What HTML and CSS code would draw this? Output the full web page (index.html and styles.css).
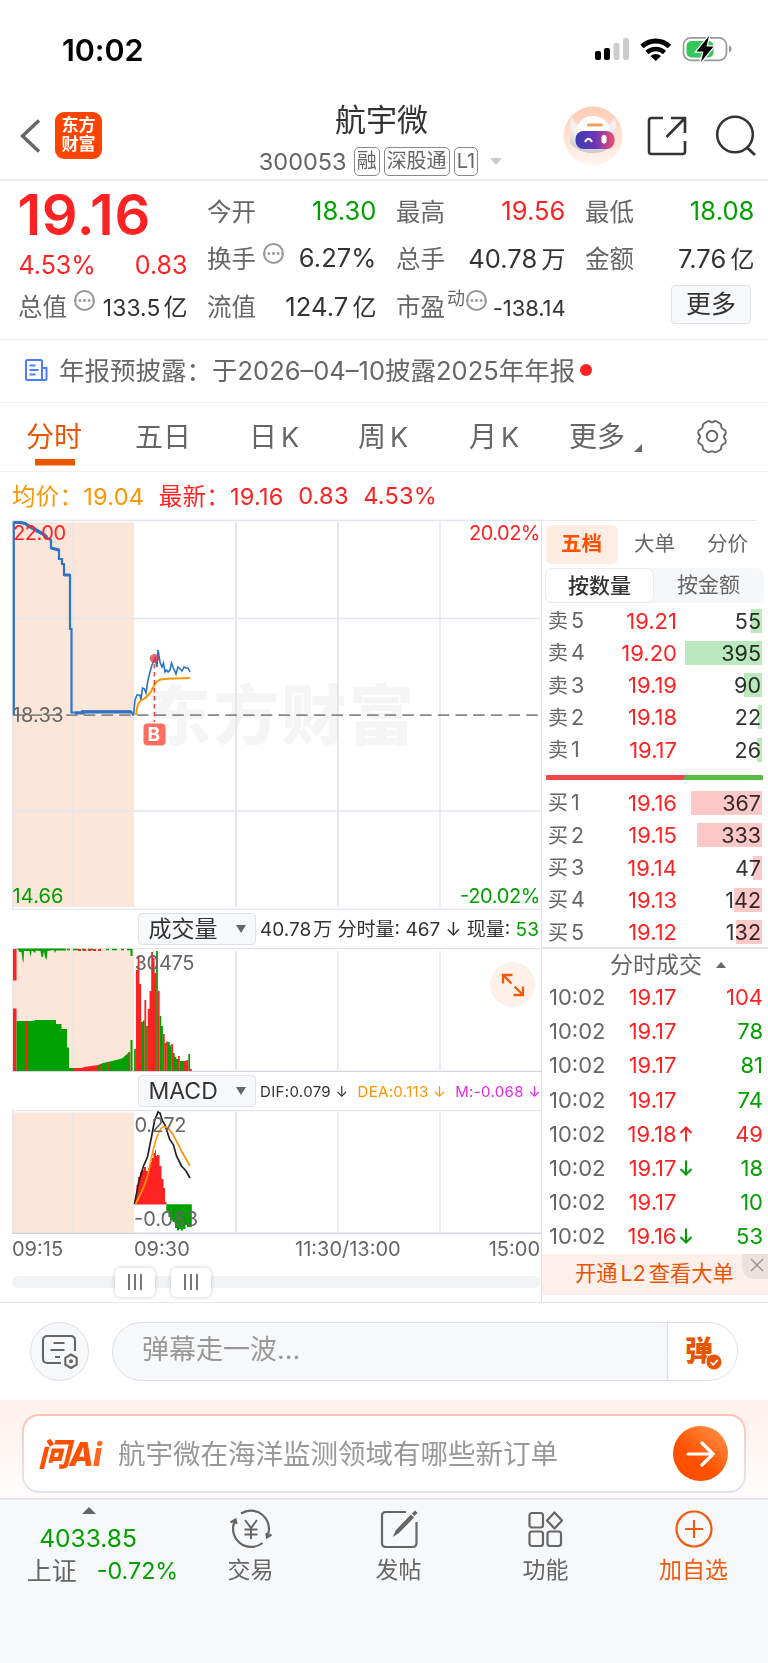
FILE: index.html
```html
<!DOCTYPE html>
<html lang="zh-CN">
<head>
<meta charset="utf-8">
<title>航宇微 300053</title>
<link rel="stylesheet" href="styles.css">
</head>
<body>
<div class="status">
  <span class="clock">10:02</span>
  <svg class="status-icons" width="140" height="40" viewBox="592 29 140 40">
    <rect x="595" y="51" width="6" height="9" rx="2"/><rect x="604" y="48" width="6" height="12" rx="2"/>
    <rect x="613.500" y="43" width="6" height="17" rx="2" fill="#ccc"/><rect x="623" y="38" width="6" height="22" rx="2" fill="#ccc"/>
    <path d="M642 46.500a20 20 0 0 1 27.500 0" fill="none" stroke="#000" stroke-width="5"/>
    <path d="M647 52.500a13 13 0 0 1 17.500 0" fill="none" stroke="#000" stroke-width="4.500"/>
    <path d="M650.500 56a8 8 0 0 1 10.500 0l-5.200 5z"/>
    <rect x="683.500" y="37.800" width="43" height="22.500" rx="7.500" fill="#fff" stroke="#999" stroke-width="1.700"/>
    <rect x="686.500" y="41" width="27" height="16.500" rx="5" fill="#34c759"/>
    <path d="M729 45.500v7q2.800-1 2.800-3.500t-2.800-3.500z" fill="#999"/>
    <path d="M709 36l-12.500 15.500h7l-2.500 10.500 12.500-15.500h-7z" stroke="#fff" stroke-width="2.500" paint-order="stroke"/>
  </svg>
</div>

<header class="header">
  <svg class="back" width="24" height="40" viewBox="0 0 24 40"><path d="M20 4.500L3.500 20 20 35.500" fill="none" stroke="#666" stroke-width="3.400"/></svg>
  <div class="logo">东方<br>财富</div>
  <div class="title">
    <h1>航宇微</h1>
    <div class="code"><span class="num">300053</span><span class="badge">融</span><span class="badge">深股通</span><span class="badge">L1</span><i class="caret"></i></div>
  </div>
  <svg class="avatar" width="60" height="60" viewBox="0 0 60 60">
    <defs>
      <linearGradient id="halo" x1="0" y1="0" x2="0" y2="1"><stop offset="0" stop-color="#ffccb3"/><stop offset="1" stop-color="#fff6f1"/></linearGradient>
      <linearGradient id="visor" x1="0" y1="0" x2="1" y2="0"><stop offset="0" stop-color="#3c3cae"/><stop offset=".5" stop-color="#6a35b8"/><stop offset="1" stop-color="#f0506e"/></linearGradient>
      <radialGradient id="shell" cx=".5" cy=".3" r=".75"><stop offset=".4" stop-color="#fff"/><stop offset="1" stop-color="#c3c0c8"/></radialGradient>
    </defs>
    <circle cx="30" cy="30" r="29.500" fill="url(#halo)"/>
    <path d="M9 11q-4 7 0 14l8-5q-6-3-8-9zM51 12q4 7 0 14l-8-5q6-3 8-9z" fill="#f1eff1"/>
    <path d="M15 19q5-9 15-9t16 9q8 5 6 17-1 5-6 6-5 5-16 5t-17-5q-5-2-6-7 0-10 8-16z" fill="url(#shell)"/>
    <rect x="24" y="17.500" width="16" height="3" rx="1.500" fill="#e9a15f"/>
    <rect x="12.500" y="25" width="39" height="18" rx="8" fill="url(#visor)"/>
    <path d="M22 36q3.500-6.500 7 0" fill="none" stroke="#fff" stroke-width="2"/><rect x="38.500" y="29" width="5" height="8.500" rx="2.200" fill="#fff"/>
  </svg>
  <svg class="share" width="42" height="42" viewBox="0 0 42 42"><path d="M17 3H5.500Q3 3 3 5.500v31Q3 39 5.500 39h31q2.500 0 2.500-2.500V26M25 3h14v15M39 3L20.500 22" fill="none" stroke="#333" stroke-width="2.600"/></svg>
  <svg class="search" width="42" height="42" viewBox="0 0 42 42"><circle cx="20" cy="19.500" r="17.800" fill="none" stroke="#333" stroke-width="2.500"/><path d="M32 32.500l8 7.500" stroke="#333" stroke-width="2.800"/></svg>
</header>

<section class="quote">
  <div class="cell price">19.16</div>
  <div class="cell"><label>今开</label><b class="green">18.30</b></div>
  <div class="cell"><label>最高</label><b class="red">19.56</b></div>
  <div class="cell"><label>最低</label><b class="green">18.08</b></div>
  <div class="cell change"><b class="red">4.53%</b><b class="red">0.83</b></div>
  <div class="cell"><label>换手</label><i class="tip"></i><b>6.27%</b></div>
  <div class="cell"><label>总手</label><b class="unit">40.78<em>万</em></b></div>
  <div class="cell"><label>金额</label><b class="unit">7.76<em>亿</em></b></div>
  <div class="cell"><label>总值</label><i class="tip"></i><b class="small unit">133.5<em>亿</em></b></div>
  <div class="cell"><label>流值</label><b class="unit">124.7<em>亿</em></b></div>
  <div class="cell"><label>市盈<sup>动</sup></label><i class="tip near"></i><b class="pe">-138.14</b></div>
  <div class="cell last"><button class="more">更多</button></div>
</section>

<section class="notice">
  <svg width="24" height="24" viewBox="0 0 24 24" fill="none" stroke="#4c7cff" stroke-width="2" stroke-linejoin="round"><path d="M18 22H3.500Q2 22 2 20.500v-17Q2 2 3.500 2H16.500Q18 2 18 3.500V22h3q1.500 0 1.500-1.500V10H18M5.500 7.500h6M5.500 12h9M5.500 16.500h6"/></svg>
  <span>年报预披露：于2026–04–10披露2025年年报</span><i class="dot"></i>
</section>

<nav class="tabs">
  <span class="on">分时</span><span>五日</span><span>日<em>K</em></span><span>周<em>K</em></span><span>月<em>K</em></span><span>更多<i class="corner"></i></span>
  <svg width="34" height="34" viewBox="0 0 34 34" fill="none" stroke="#666" stroke-width="1.900"><path d="M12.500 2.500q1.500-1 3 .4 1.500 1 3 0 1.500-1.400 3-.4l3.500 2q1.500 1 1.200 2.800 0 2 1.800 2.800 2.600.8 2.700 2.400v1.500q-.2 1.400-1.400 2.500-.8 1 0 2.500 1.200 1 1.400 2.500v1.500q-.1 1.600-2.700 2.400-1.800.8-1.800 2.800.3 1.800-1.200 2.800l-3.500 2q-1.500 1-3-.4-1.500-1-3 0-1.500 1.400-3 .4l-3.500-2q-1.500-1-1.200-2.800 0-2-1.800-2.800-2.600-.8-2.700-2.400v-1.500q.2-1.500 1.400-2.500.8-1.500 0-2.500-1.200-1.100-1.400-2.500V12.500q.1-1.600 2.700-2.400 1.800-.8 1.800-2.800-.3-1.800 1.200-2.800z"/><circle cx="17" cy="17" r="5.300"/></svg>
</nav>

<div class="summary"><span class="avg">均价：19.04</span><span class="red">最新：19.16</span><span class="red">0.83</span><span class="red">4.53%</span></div>

<main class="board">
  <section class="charts">
    <svg class="plot" width="542" height="391" viewBox="0 519 542 391">
      <rect x="12.500" y="522.500" width="121.500" height="384.500" fill="#fce5d9"/>
      <g font-weight="800" font-size="65" fill="#f5f5f5"><text x="146" y="739" textLength="268">东方财富</text></g>
      <g stroke="#e3e6ed" stroke-width="1.400" fill="none"><path d="M12 520.500H542M12.700 520V909M12 909.500H542M12 618.500H542M12 811H542M73 522V907M440 522V907"/><path d="M236 522V907M338 522V907" stroke-width="1.900"/></g>
      <path d="M13 715.200H542" stroke="#888" stroke-width="1.700" stroke-dasharray="11.500 6.200"/>
      <path d="M13.800 715V522.500L20 522.500 25 523.500 28 526 33 529 38 532 43 534.500 46 537.500 51 540V548L59 550V559H62V564H64V575H70V629H71.500V712.500H82V711.500H131L133.500 715.500" fill="none" stroke="#2e74c4" stroke-width="2.200"/>
      <path d="M14 522.500h7l4 1 4 2.500 9 5 6 3.500 3 3M51 548l8 2M64 575h6M75 713h8v-1.200h48" fill="none" stroke="#2e74c4" stroke-width="3.200"/>
      <path d="M133.500 715.500L135 700 137 695 140 695 141 700 142.500 688 144.500 689 146 693 148 680 150 672 152 665 155 658 157 667 158 650 160 662 162 667 163.500 663 165 672 166.500 670 168 672 170 670 171.500 663 173 667 176 674 178 667 180 669 182 671 184 667 186 668 188 668 190 672" fill="none" stroke="#2e74c4" stroke-width="1.600"/>
      <path d="M136 715C137 706 138 702 141 700.500 147 698 150 694 154 686 157 680 160 679 167 678.700L190 678" fill="none" stroke="#ff9500" stroke-width="1.900"/>
      <path d="M154.400 664V722" stroke="#f04848" stroke-width="1.600" stroke-dasharray="4.500 3.500"/>
      <circle cx="154.400" cy="658.500" r="4.600" fill="#e5353d" fill-opacity=".75"/>
      <rect x="143.500" y="723.500" width="22" height="22" rx="4" fill="#ff6f61"/>
      <text x="147.600" y="741.200" font-size="19" font-weight="700" fill="#fff">B</text>
      <g font-size="20"><text x="13" y="540" textLength="53" fill="#f22">22.00</text><text x="12.500" y="721.500" textLength="51" fill="#666">18.33</text><text x="12.500" y="902.500" textLength="51" fill="#00a000">14.66</text>
      <text x="469" y="540" textLength="71.500" fill="#f22">20.02%</text><text x="460" y="902.500" textLength="80.500" fill="#00a000">-20.02%</text></g>
    </svg>

    <div class="bar"><button class="pick">成交量<i></i></button><span class="vol">40.78<em>万</em> 分时量: 467 ↓ 现量: <b class="green">53</b></span></div>

    <div class="volume">
    <svg class="plot" width="542" height="124" viewBox="0 948 542 124">
      <rect x="12.500" y="948.500" width="121.500" height="122" fill="#fce5d9"/>
      <g stroke="#e3e6ed" stroke-width="1.400"><path d="M12 948.500H542M12.700 948V1071M73 951V1070M440 951V1070"/><path d="M236 951V1070" stroke-width="1.900"/><path d="M338 951V1070"/></g>
      <path d="M12 1071.500H542" stroke="#d3d6dc" stroke-width="1.400"/>
      <path d="M13 949h3.500v31.500H13zM13 1008.500h3.500V1071H13z" fill="#f22"/>
      <path d="M16.500 1071V1021H34L35 1020H56V1024H61.500V1029H67V1047.500H69V1071z" fill="#00a000"/>
      <path d="M25.500 1021h2V1071h-2z" fill="#f22"/>
      <path d="M69 1071V1068H82L84 1067 98 1065V1071z" fill="#f22"/><path d="M69 1071V1068h4l1 0.500v2.500z" fill="#00a000"/>
      <path d="M98 1071V1065L103 1063 112 1061 122 1058.500 126 1055 129 1052V1071z" fill="#00a000"/>
      <path d="M108 1062.500V1071M129.500 1052V1071M101 1064V1071" stroke="#f22" stroke-width="1.500"/>
      <path d="M131.500 1040V1071M131.500 949v7" stroke="#00a000" stroke-width="2"/>
      <path d="M17 948.500H66V950.500H56L55 953 54 950 47.500 951 46.500 960 45 957 44 951 43 957 41.500 957 40.500 951 36 950.500 35 953 33 951 31.500 951 30.500 957.500 29.500 951 24 951 23.500 963 22.500 960 21.500 952 20 952 18 950z" fill="#00a000"/>
      <path d="M67 949.500H96M106 949.500H131" stroke="#00a000" stroke-width="1.500" stroke-dasharray="3 3 5 4"/>
      <path d="M78 950H101" stroke="#f22" stroke-width="1.800" stroke-dasharray="3 2"/>
      <g stroke-width="1.800">
        <path d="M135 1071V1049M142 1071V1022M143.700 1071V1020.500M147 1071V1026M157 1071V951M160.400 1071V1016M162 1071V1026M165.400 1071V1043M168.800 1071V1042M170.500 1071V1045.500M173.800 1071V1053M175.500 1071V1057M177.200 1071V1059M180.600 1071V1061M182.200 1071V1061M189.200 1071V1054" stroke="#00a000"/>
        <path d="M136.800 1071V970M138.500 1071V957M140.200 1071V984M145.300 1071V1000M148.700 1071V1009M150.400 1071V991M152.100 1071V952M153.700 1071V958M155.300 1071V973M158.700 1071V991M163.800 1071V1034M167.100 1071V1041.500M172.100 1071V1044M178.900 1071V1056M183.900 1071V1061M185.600 1071V1061M187.300 1071V1060M190.900 1071V1069" stroke="#f22"/>
      </g>
      <text x="134.500" y="970" font-size="20" textLength="60" fill="#666">30475</text>
    </svg>
    <div class="expand"><svg width="24" height="24" viewBox="0 0 24 24" fill="none" stroke="#f25b0c" stroke-width="2.300"><path d="M2 10.500V2h9.500M2 2l8.500 8.500M22 13.500V22h-9.500M22 22l-8.500-8.500"/></svg></div>
    </div>

    <div class="bar"><button class="pick">MACD<i></i></button><span class="macd"><span>DIF:0.079 ↓</span><span class="avg">DEA:0.113 ↓</span><span class="pink">M:-0.068 ↓</span></span></div>

    <svg class="plot" width="542" height="124" viewBox="0 1110 542 124">
      <rect x="12.500" y="1112.500" width="121.500" height="120" fill="#fce5d9"/>
      <g stroke="#e3e6ed" stroke-width="1.400"><path d="M12 1110.500H542M12.700 1110V1233M73 1112V1232M440 1112V1232"/><path d="M236 1112V1232" stroke-width="1.900"/><path d="M338 1112V1232"/></g>
      <path d="M12 1233.300H542" stroke="#d3d6dc" stroke-width="1.500"/>
      <path d="M135 1204.500V1196H136.500V1185H138V1177H140V1172H142V1170H144V1167H146V1171H148V1168H150V1162H152V1158H153.500V1153H155V1150H156V1156H157V1155H159.500V1166H161.500V1179H163.500V1188H165V1202H166.500V1204.500z" fill="#f22"/>
      <path d="M166.300 1204.200H191.800V1227H187V1225H185.500V1229H183V1230.500H181V1229H179V1230.500H177V1228H175V1222H172.500V1220H170.500V1217H168.500V1211H166.300z" fill="#00a000"/>
      <path d="M134.500 1204L138.500 1183 143.500 1166 147.500 1157 151.500 1137 154.500 1121 158 1112 160 1113 162.500 1121 165 1125 169.500 1139 173.500 1145 176.500 1156 181.500 1166 186 1171 190 1178" fill="none" stroke="#222" stroke-width="1.700"/>
      <path d="M135.500 1204Q146 1185 149 1170 157 1127 164 1126.500C171 1128 174 1137 182 1152L190 1166" fill="none" stroke="#ff9500" stroke-width="1.700"/>
      <g font-size="20" fill="#666"><text x="134.500" y="1132" textLength="52">0.272</text><text x="134" y="1226" textLength="64">-0.083</text></g>
    </svg>

    <div class="axis"><span>09:15</span><span>09:30</span><span>11:30/13:00</span><span>15:00</span></div>
    <div class="slider"><i></i><i></i></div>
  </section>

  <aside class="depth">
    <div class="dtabs"><span class="on">五档</span><span>大单</span><span>分价</span></div>
    <div class="seg"><span class="on">按数量</span><span>按金额</span></div>
    <div class="book sell">
      <div><span>卖<em>5</em></span><b>19.21</b><span class="q"><i style="width:11px"></i>55</span></div>
      <div><span>卖<em>4</em></span><b>19.20</b><span class="q"><i style="width:77px"></i>395</span></div>
      <div><span>卖<em>3</em></span><b>19.19</b><span class="q"><i style="width:18px"></i>90</span></div>
      <div><span>卖<em>2</em></span><b>19.18</b><span class="q"><i style="width:4px"></i>22</span></div>
      <div><span>卖<em>1</em></span><b>19.17</b><span class="q"><i style="width:5px"></i>26</span></div>
    </div>
    <div class="ratio"></div>
    <div class="book buy">
      <div><span>买<em>1</em></span><b>19.16</b><span class="q"><i style="width:71px"></i>367</span></div>
      <div><span>买<em>2</em></span><b>19.15</b><span class="q"><i style="width:65px"></i>333</span></div>
      <div><span>买<em>3</em></span><b>19.14</b><span class="q"><i style="width:9px"></i>47</span></div>
      <div><span>买<em>4</em></span><b>19.13</b><span class="q"><i style="width:28px"></i>142</span></div>
      <div><span>买<em>5</em></span><b>19.12</b><span class="q"><i style="width:26px"></i>132</span></div>
    </div>
    <div class="ticks-head">分时成交<i></i></div>
    <div class="ticks">
      <div><span>10:02</span><b>19.17</b><i></i><u class="red">104</u></div>
      <div><span>10:02</span><b>19.17</b><i></i><u class="green">78</u></div>
      <div><span>10:02</span><b>19.17</b><i></i><u class="green">81</u></div>
      <div><span>10:02</span><b>19.17</b><i></i><u class="green">74</u></div>
      <div><span>10:02</span><b>19.18</b><i class="red"><svg width="14" height="16" viewBox="0 0 14 16"><path d="M7 15.500V1.500M1.500 7L7 1.500 12.500 7"/></svg></i><u class="red">49</u></div>
      <div><span>10:02</span><b>19.17</b><i class="green"><svg width="14" height="16" viewBox="0 0 14 16"><path d="M7 .5V14.500M1.500 9L7 14.500 12.500 9"/></svg></i><u class="green">18</u></div>
      <div><span>10:02</span><b>19.17</b><i></i><u class="green">10</u></div>
      <div><span>10:02</span><b>19.16</b><i class="green"><svg width="14" height="16" viewBox="0 0 14 16"><path d="M7 .5V14.500M1.500 9L7 14.500 12.500 9"/></svg></i><u class="green">53</u></div>
    </div>
    <div class="promo">开通<em>L2</em>查看大单<span class="close"><svg width="14" height="14" viewBox="0 0 14 14"><path d="M1 1l12 12M13 1L1 13" stroke="#999" stroke-width="1.500"/></svg></span></div>
  </aside>
</main>

<section class="comment">
  <div class="round"><svg width="38" height="36" viewBox="0 0 38 36" fill="none" stroke="#666" stroke-width="2.100"><path d="M20 29H6.500Q2 29 2 24.500V6.500Q2 2 6.500 2h23Q34 2 34 6.500V17"/><path d="M12.500 9h11M9.500 16h14M14 23h5"/><path d="M30 20.500l5.700 3.400v6.800L30 34l-5.700-3.300v-6.800z" stroke-linejoin="round"/><circle cx="30" cy="27.200" r="1" /></svg></div>
  <div class="field"><span>弹幕走一波...</span><div class="send">弹<i><svg width="16" height="16" viewBox="0 0 16 16"><circle cx="8" cy="8" r="7.500" fill="#ea5504"/><path d="M4.500 8l2.700 2.800 4.600-5" fill="none" stroke="#fff" stroke-width="1.700"/></svg></i></div></div>
</section>

<section class="ask">
  <div class="card">
    <span class="brand">问Ai</span><span class="query">航宇微在海洋监测领域有哪些新订单</span>
    <div class="go"><svg width="30" height="26" viewBox="0 0 30 26"><path d="M2 13h25M16 2l11 11-11 11" fill="none" stroke="#fff" stroke-width="3.200" stroke-linecap="round" stroke-linejoin="round"/></svg></div>
  </div>
</section>

<footer class="dock">
  <div class="index"><i></i><b>4033.85</b><p><span>上证</span><b>-0.72%</b></p></div>
  <div class="item"><svg width="44" height="40" viewBox="0 0 44 40" fill="none" stroke="#666" stroke-width="2.200"><path d="M12 4.500A18.200 18.200 0 0 1 38.500 27M6 11.500A18.200 18.200 0 0 0 33.500 34"/><path d="M1.500 13.500L6.500 10.500 7.500 15M42.500 25.500L38 28.500 37.300 24"/><path d="M16 11l6 8 6-8M22 19v11M15.500 20.500h13M15.500 25.500h13" stroke-width="2"/></svg><span>交易</span></div>
  <div class="item"><svg width="40" height="40" viewBox="0 0 40 40" fill="none" stroke="#666" stroke-width="2.200"><path d="M27 3H7Q3 3 3 7v27q0 4 4 4h26.500q4 0 4-4V13"/><path d="M17.500 21.500L32 6.500l2 2L19.500 23.500l-4 2.500zM34 4.500l2-2 1.500 1.500-2 2z" fill="#666" stroke-width="1.500"/></svg><span>发帖</span></div>
  <div class="item"><svg width="40" height="40" viewBox="0 0 40 40" fill="none" stroke="#666" stroke-width="2.200" stroke-linejoin="round"><rect x="3.500" y="4" width="13.500" height="14.500" rx="2.500"/><path d="M28.500 3.500l7.500 8-7.500 8-7.500-8z"/><rect x="3.500" y="22.500" width="13.500" height="14.500" rx="2.500"/><rect x="21.500" y="22.500" width="13.500" height="14.500" rx="2.500"/></svg><span>功能</span></div>
  <div class="item hot"><svg width="40" height="40" viewBox="0 0 40 40" fill="none" stroke="#f25b0c" stroke-width="2.200"><circle cx="20" cy="20" r="17.500"/><path d="M20 11v18M11 20h18"/></svg><span>加自选</span></div>
</footer>
</body>
</html>
```

FILE: styles.css
```css
* { box-sizing: border-box; }
body { margin: 0; width: 768px; height: 1663px; overflow: hidden; background: #fff; color: #333; font-family: Inter, "Noto Sans CJK SC", sans-serif; }
b, em, i, u, h1 { font-weight: 400; font-style: normal; text-decoration: none; }
svg { display: block; flex: none; }
svg text { font-family: Inter, "Noto Sans CJK SC", sans-serif; }
button { font-family: inherit; padding: 0; color: #333; background: #f7f8fa; border: 1.5px solid #dfe1e6; border-radius: 4px; }
.red { color: #f22; }
.green { color: #00a000; }
.avg { color: #ff9500; }
.pink { color: #e32be8; }

.status { display: flex; justify-content: space-between; height: 98px; padding: 29px 36px 0 62px; }
.clock { height: 40px; line-height: 41px; font-size: 30.500px; font-weight: 600; color: #000; letter-spacing: -0.1px; }

.header { display: flex; align-items: center; height: 83px; padding-bottom: 5px; border-bottom: 2px solid #ececee; }
.back { margin-left: 19px; }
.logo { width: 47px; height: 47px; margin: -1px 0 0 12px; padding-top: 4px; border-radius: 9px; background: #f40; color: #fff; font-size: 17px; line-height: 19px; font-weight: 700; text-align: center; }
.title { flex: 1; display: flex; flex-direction: column; align-items: center; margin-top: -2px; padding-left: 98px; }
.title h1 { margin: 5px 0 0; font-size: 31px; line-height: 42px; }
.code { display: flex; align-items: center; height: 30px; margin-top: 5px; margin-left: -2px; color: #666; }
.code .num { font-size: 23.5px; letter-spacing: 0; margin-right: 7px; }
.badge { height: 29px; padding: 0 2px; margin-right: 4px; border: 1.5px solid #888; border-radius: 5px; font-size: 20px; line-height: 26px; }
.caret { border: 6.5px solid transparent; border-top: 7px solid #ccc; border-bottom: 0; margin-left: 8px; }
.avatar { margin-right: 23px; }
.share { margin-right: 27px; }
.search { margin-right: 11px; }

.quote { display: grid; grid-template-columns: repeat(4, 169px); column-gap: 20px; grid-auto-rows: 47.300px; height: 159px; padding: 6px 0 0 18.500px; border-bottom: 1.5px solid #f1f1f3; }
.cell { display: flex; align-items: center; font-size: 25px; }
.cell label { color: #666; font-size: 24.5px; margin-left: -0.5px; white-space: nowrap; }
.cell b { margin-left: auto; font-size: 25.500px; letter-spacing: 0.1px; white-space: nowrap; }
.cell .unit em { margin-left: 4px; font-size: 24px; }
.cell .small { font-size: 22.800px; letter-spacing: 0.1px; }
.cell .small em { margin-left: 3px; }
.cell.price { padding-top: 8px; font-size: 56px; font-weight: 600; color: #f22; letter-spacing: 0.6px; margin-left: -1px; }
.cell.change { padding-top: 15px; }
.cell.change b { font-size: 25px; letter-spacing: 0; }
.cell.change b:first-child { margin-left: 0; }
.tip { flex: none; width: 21px; height: 21px; margin: -9px 0 0 7px; border: 2px solid #999; border-radius: 50%; background: radial-gradient(circle, #999 1.2px, transparent 1.6px) center / 4.600px 17px; }
.tip.near { margin-left: 1px; }
.cell sup { font-size: 18px; vertical-align: 11px; line-height: 0; margin-left: 2px; }
.cell .pe { font-size: 22px; padding-top: 5px; letter-spacing: -0.1px; }
.cell.last { justify-content: flex-end; padding-right: 3.500px; }
.more { width: 80px; height: 39px; font-size: 25px; line-height: 34px; margin-top: -2px; }

.notice { display: flex; align-items: center; height: 63px; padding: 0 0 2px 24px; border-bottom: 1.5px solid #f1f1f3; font-size: 25.500px; color: #666; }
.notice span { margin: -3px 0 0 11px; white-space: nowrap; }
.dot { width: 12px; height: 12px; margin-left: 5px; border-radius: 50%; background: #f22; }

.tabs { display: grid; grid-template-columns: 109px 109px 112px 110px 103px 126px 34px; align-items: center; height: 69px; padding: 0 0 2px 26px; border-bottom: 1.5px solid #f1f1f3; font-size: 28px; color: #666; }
.tabs span { height: 66px; line-height: 68px; white-space: nowrap; }
.tabs em { margin-left: 4px; font-size: 27px; }
.tabs span:nth-child(3) { padding-left: 5px; }
.tabs span:nth-child(4) { padding-left: 2px; }
.tabs span:nth-child(5) { padding-left: 3px; }
.tabs .on { width: 57px; color: #ea5504; background: linear-gradient(#ea5504, #ea5504) 9px 56px / 40px 6.500px no-repeat; }
.corner { display: inline-block; margin-left: 9px; border-left: 8px solid transparent; border-bottom: 8px solid #666; vertical-align: -5px; }

.summary { display: flex; gap: 14.500px; align-items: center; height: 47px; padding: 0 0 1px 12px; font-size: 23.500px; white-space: nowrap; }
.summary span { letter-spacing: 0.25px; }

.board { display: flex; height: 784px; border-bottom: 1.5px solid #e3e6ea; }
.charts { flex: none; width: 541px; }
.bar { display: flex; align-items: center; height: 38px; padding-left: 138px; }
.pick { display: flex; align-items: center; justify-content: space-between; flex: none; width: 118px; height: 32px; padding: 0 9.500px; font-size: 23px; line-height: 28px; }
.pick i { border: 5px solid transparent; border-top: 8px solid #666; border-bottom: 0; }
.vol { margin: -3px 0 0 4px; font-size: 19px; white-space: pre; }
.vol em { margin-left: 2px; }
.macd { display: flex; gap: 9px; margin-left: 4px; font-size: 15px; letter-spacing: 0.35px; white-space: nowrap; }
.volume { position: relative; }
.expand { position: absolute; left: 490px; top: 14px; display: flex; align-items: center; justify-content: center; width: 45px; height: 45px; border-radius: 50%; background: #fef1ea; }
.axis { display: grid; grid-template-columns: 122px 161px 150px 1fr; height: 33px; padding-left: 12px; font-size: 20px; line-height: 31px; color: #666; }
.axis span:last-child { text-align: right; padding-right: 1px; }
.slider { display: flex; align-items: center; gap: 16px; height: 12px; margin: 9px 0 0 12px; padding-left: 103px; border-radius: 6px; background: #f2f3f5; }
.slider i { width: 40px; height: 29px; border-radius: 5px; background: linear-gradient(90deg, #777 2px, transparent 2px 6px, #777 6px 8px, transparent 8px 12px, #777 12px) center / 14px 16px no-repeat #fff; box-shadow: 0 0 4px rgba(0,0,0,.22); }

.depth { width: 227px; border-left: 1.5px solid #e0e3e9; }
.dtabs { display: flex; height: 44px; margin: 1px 12px 0 0; padding: 4px 0 0 3.500px; border-top: 1.500px solid #e6e8ec; font-size: 20.500px; line-height: 38px; color: #666; white-space: nowrap; }
.dtabs span { flex: none; width: 72px; text-align: center; }
.dtabs .on { height: 39px; border-radius: 6px; background: #ffece3; color: #ff5000; font-weight: 700; }
.dtabs span + span { margin-left: 1px; }
.seg { display: flex; height: 35px; margin: 4px 4px 0 3px; border-radius: 7px; background: #f6f7f9; font-size: 21px; line-height: 33px; color: #666; }
.seg span { width: 109px; text-align: center; }
.seg .on { border: 1.5px solid #e9eaee; border-radius: 7px; background: #fff; color: #333; font-weight: 500; }
.book { padding: 1px 6px 0; font-size: 22px; }
.book div { display: grid; grid-template-columns: 50px 79px 1fr; align-items: center; height: 32.300px; line-height: 32px; }
.book b { color: #f22; text-align: right; }
.book span { color: #666; font-size: 20px; white-space: nowrap; }
.book em { margin-left: 3px; font-size: 21.500px; }
.book .q { position: relative; font-size: 21.500px; color: #333; text-align: right; padding-right: 1px; }
.q i { position: absolute; right: 0; top: 4px; height: 24px; mix-blend-mode: multiply; background: #bce8bd; }
.buy .q i { background: #fec8c9; }
.ratio { height: 5px; margin: 10px 5px 5px 4px; border-radius: 1px; background: linear-gradient(120deg, #ef484b 63.500%, #58bc42 63.500%); }
.buy { height: 161.500px; }
.ticks-head { display: flex; align-items: center; height: 33px; padding: 0 0 2px 68px; border-top: 2px solid #e0e3e9; font-size: 23px; color: #666; }
.ticks-head i { margin: 3px 0 0 14px; border: 5px solid transparent; border-bottom: 6px solid #666; border-top: 0; }
.ticks div { display: grid; grid-template-columns: 58px 70.500px 16px 1fr; align-items: center; height: 34.200px; padding: 0 5px 0 7px; font-size: 22px; }
.ticks span { color: #666; }
.ticks b { color: #f22; text-align: right; margin-right: 1px; }
.ticks u { text-align: right; }
.ticks i { padding-left: 1px; }
.ticks svg { fill: none; stroke: currentColor; stroke-width: 2; }
.promo { position: relative; height: 41px; margin-top: 1px; padding-left: 33px; background: #fdf0ea; color: #ea5504; font-size: 21.300px; line-height: 39px; }
.promo em { margin: 0 3px; }
.close { position: absolute; right: 0; top: 0; display: flex; width: 26px; height: 25px; padding: 4px 0 0 8px; border-radius: 0 0 0 12px; background: #ece1dc; }

.comment { display: flex; align-items: center; height: 97px; padding-left: 30px; }
.round { display: flex; align-items: center; justify-content: center; width: 59px; height: 59px; border: 1.500px solid #dcdee4; border-radius: 50%; background: #f7f8fa; }
.field { display: flex; width: 626px; height: 59px; margin-left: 23px; border: 1.500px solid #dcdee4; border-radius: 30px; overflow: hidden; background: #f7f8fa; }
.field span { flex: 1; padding-left: 29px; font-size: 27px; line-height: 53px; color: #999; }
.send { position: relative; width: 70px; padding-left: 17px; border-left: 1.500px solid #dcdee4; background: #fff; color: #ea5504; font-size: 28px; line-height: 56px; font-weight: 800; }
.send i { position: absolute; left: 37px; top: 30px; border: 1px solid #fff; border-radius: 50%; }

.ask { height: 98px; padding: 14px 22px 0; background: linear-gradient(#fff0eb, #fffdfc); }
.card { display: flex; align-items: center; height: 79px; padding: 0 16px 0 14px; border: 2px solid transparent; border-radius: 17px; background: linear-gradient(#fff, #fff) padding-box, linear-gradient(#ffc0b5, #f6d9df 60%, #dfe4f7) border-box; }
.brand { width: 80px; margin-top: -3px; font-size: 32px; font-weight: 800; font-style: italic; letter-spacing: -0.8px; color: transparent; background: linear-gradient(90deg, #ff5000 60%, #ff8c5a); background-clip: text; white-space: nowrap; }
.query { flex: 1; margin-top: -3px; font-size: 27.500px; color: #999; white-space: nowrap; }
.go { display: flex; align-items: center; justify-content: center; width: 55px; height: 55px; border-radius: 50%; background: linear-gradient(220deg, #ff9a4d, #ff5000 60%); }

.dock { display: grid; grid-template-columns: 176px 149px 147px 147px 149px; height: 165px; border-top: 2px solid #e3e5e8; background: #f7f8fa; color: #666; }
.index { display: flex; flex-direction: column; align-items: center; padding-top: 7px; }
.index i { margin-left: 2px; border: 7px solid transparent; border-bottom: 7px solid #666; border-top: 0; }
.index b { font-size: 24.500px; line-height: 36px; margin-top: 6px; color: #00a000; }
.index p { display: flex; gap: 20px; margin: -3px 0 0 29px; font-size: 25px; line-height: 36px; }
.index p b { margin: 0; font-size: 23.300px; white-space: nowrap; }
.index p span { white-space: nowrap; }
.item { display: flex; flex-direction: column; align-items: center; padding-top: 9px; font-size: 23px; line-height: 34px; }
.item span { margin-top: 4px; }
.hot { color: #f25b0c; }
```
